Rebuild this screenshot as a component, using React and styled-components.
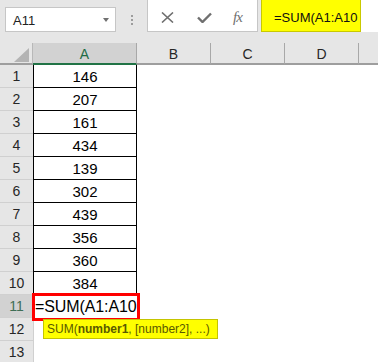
import React from 'react';
import styled, { createGlobalStyle } from 'styled-components';

const GlobalStyle = createGlobalStyle`
  html, body {
    margin: 0;
    padding: 0;
    background: #ffffff;
    overflow: hidden;
  }
  body {
    font-family: 'Liberation Sans', Arial, sans-serif;
  }
`;

const values = [146, 207, 161, 434, 139, 302, 439, 356, 360, 384];
const columns = ['B', 'C', 'D', ''];

export default function App() {
  return (
    <>
      <GlobalStyle />
      <Sheet>
        <TopBar>
          <NameBox>
            A11
            <DropArrow />
          </NameBox>
          <Grip>
            <Dot />
            <Dot />
            <Dot />
          </Grip>
          <ButtonBox>
            <IconSlot>
              <svg width="13" height="11" viewBox="0 0 13 11">
                <path d="M1 0.5 L12 10.5 M12 0.5 L1 10.5" stroke="#6f6f6f" strokeWidth="1.6" fill="none" />
              </svg>
            </IconSlot>
            <IconSlot>
              <svg width="15" height="11" viewBox="0 0 15 11">
                <path d="M1 5.5 L5.5 10 L14 1.5" stroke="#6f6f6f" strokeWidth="2.4" fill="none" />
              </svg>
            </IconSlot>
            <IconSlot>
              <Fx>fx</Fx>
            </IconSlot>
          </ButtonBox>
          <FormulaInput>
            <Highlight>=SUM(A1:A10</Highlight>
          </FormulaInput>
        </TopBar>

        <Grid>
          <Corner>
            <Triangle />
          </Corner>
          <ColHead $active>A</ColHead>
          {columns.map((c, i) => (
            <ColHead key={i} $last={i === columns.length - 1}>
              {c}
            </ColHead>
          ))}

          {values.map((v, i) => (
            <React.Fragment key={i}>
              <RowHead>{i + 1}</RowHead>
              <DataCell>{v}</DataCell>
              {columns.map((c, j) => (
                <Cell key={j} />
              ))}
            </React.Fragment>
          ))}

          <RowHead $active>11</RowHead>
          <PlainCell>
            <EditBox>=SUM(A1:A10</EditBox>
          </PlainCell>
          {columns.map((c, j) => (
            <Cell key={j} />
          ))}

          <RowHead>12</RowHead>
          <PlainCell>
            <Tip>
              SUM(<b>number1</b>, [number2], ...)
            </Tip>
          </PlainCell>
          {columns.map((c, j) => (
            <Cell key={j} />
          ))}

          <RowHead>13</RowHead>
          <PlainCell />
          {columns.map((c, j) => (
            <Cell key={j} />
          ))}
        </Grid>
      </Sheet>
    </>
  );
}

const Sheet = styled.div`
  width: 378px;
  height: 362px;
  overflow: hidden;
  background: #ffffff;
`;

const TopBar = styled.div`
  display: flex;
  align-items: flex-start;
  height: 43px;
  background: #e6e6e6;
`;

const NameBox = styled.div`
  position: relative;
  box-sizing: border-box;
  margin: 7px 0 0 5px;
  width: 111px;
  height: 25px;
  background: #ffffff;
  border: 1px solid #c6c6c6;
  display: flex;
  align-items: center;
  padding: 1px 0 0 7px;
  font-size: 13px;
  color: #222222;
`;

const DropArrow = styled.span`
  position: absolute;
  right: 6px;
  top: 10px;
  width: 0;
  height: 0;
  border-left: 3.5px solid transparent;
  border-right: 3.5px solid transparent;
  border-top: 4px solid #707070;
`;

const Grip = styled.div`
  width: 31px;
  height: 32px;
  display: flex;
  flex-direction: column;
  align-items: center;
  justify-content: center;
  gap: 2px;
  padding-top: 8px;
  box-sizing: border-box;
`;

const Dot = styled.span`
  width: 2px;
  height: 2px;
  background: #9c9c9c;
`;

const ButtonBox = styled.div`
  box-sizing: border-box;
  width: 111px;
  height: 32px;
  background: #ffffff;
  border: 1px solid #c6c6c6;
  border-top: none;
  display: grid;
  grid-template-columns: 38px 36px 1fr;
  align-items: center;
  padding: 4px 0 0 0;
`;

const IconSlot = styled.div`
  display: flex;
  justify-content: center;
  align-items: center;
  &:last-child {
    justify-content: flex-start;
    padding-left: 11px;
  }
`;

const Fx = styled.span`
  font-family: 'Liberation Serif', 'Times New Roman', serif;
  font-style: italic;
  font-size: 15px;
  color: #707070;
  letter-spacing: -1px;
`;

const FormulaInput = styled.div`
  flex: 1;
  margin-left: 3px;
  height: 32px;
  background: #ffffff;
  display: flex;
`;

const Highlight = styled.div`
  box-sizing: border-box;
  width: 100px;
  height: 32px;
  background: #ffff00;
  border: 1px solid #c9c900;
  border-top: none;
  padding: 10px 0 0 12px;
  font-size: 13px;
  color: #111111;
  white-space: nowrap;
`;

const Grid = styled.div`
  display: grid;
  grid-template-columns: 33px 104px 74px 74px 74px 1fr;
  grid-template-rows: 22px repeat(13, 23px);
`;

const Corner = styled.div`
  background: #e6e6e6;
  border-right: 1px solid #b8b8b8;
  border-bottom: 2px solid #9e9e9e;
  display: flex;
  justify-content: flex-end;
  align-items: flex-end;
  padding: 0 3px 1px 0;
`;

const Triangle = styled.span`
  width: 0;
  height: 0;
  border-left: 15px solid transparent;
  border-bottom: 14px solid #b4b4b4;
`;

const ColHead = styled.div`
  background: ${p => (p.$active ? '#d2d2d2' : '#e6e6e6')};
  color: ${p => (p.$active ? '#1e6b45' : '#262626')};
  border-right: ${p => (p.$last ? 'none' : '1px solid #a8a8a8')};
  border-bottom: 2px solid ${p => (p.$active ? '#217346' : '#9e9e9e')};
  display: flex;
  align-items: center;
  justify-content: center;
  font-size: 14px;
  padding-top: 1px;
`;

const RowHead = styled.div`
  box-sizing: border-box;
  background: ${p => (p.$active ? '#d2d2d2' : '#e6e6e6')};
  color: ${p => (p.$active ? '#3f6e55' : '#262626')};
  border-bottom: 1px solid #d0d0d0;
  display: flex;
  align-items: center;
  justify-content: center;
  font-size: 14px;
`;

const DataCell = styled.div`
  box-sizing: border-box;
  border-left: 1px solid #000000;
  border-right: 1px solid #000000;
  border-bottom: 1px solid #000000;
  display: flex;
  align-items: center;
  justify-content: center;
  font-size: 15px;
  color: #000000;
`;

const PlainCell = styled.div`
  position: relative;
  border-left: 1px solid #d0d0d0;
`;

const Cell = styled.div``;

const EditBox = styled.div`
  position: absolute;
  top: -2px;
  left: -2px;
  right: -3px;
  bottom: -3px;
  z-index: 2;
  background: #ffffff;
  border: 3px solid #ff0000;
  display: flex;
  align-items: center;
  font-size: 16px;
  color: #000000;
  white-space: nowrap;
  padding-left: 0;
  letter-spacing: -0.1px;
`;

const Tip = styled.div`
  position: absolute;
  top: 1px;
  left: 9px;
  z-index: 3;
  box-sizing: border-box;
  height: 20px;
  width: 175px;
  background: #ffff00;
  border: 1px solid #c4c400;
  display: flex;
  align-items: center;
  padding-left: 3px;
  font-size: 12px;
  color: #5a5a00;
  white-space: nowrap;

  b {
    font-weight: bold;
  }
`;
